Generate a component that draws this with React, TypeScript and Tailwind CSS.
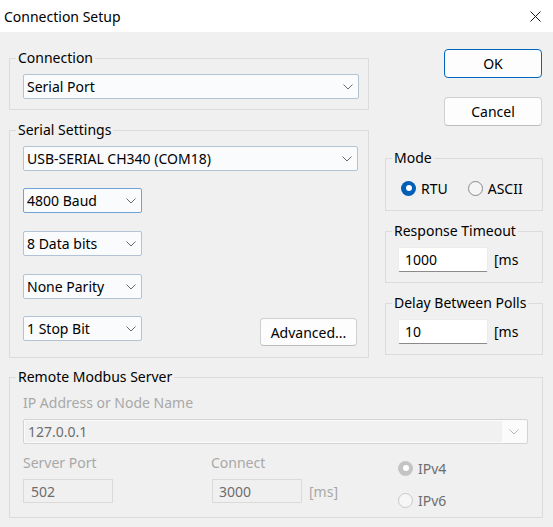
import React from 'react';

function Chevron({ color = '#6a6a6a' }: { color?: string }) {
  return (
    <svg width="10" height="6" viewBox="0 0 10 6" className="shrink-0">
      <polyline points="0.5,0.5 5,5 9.5,0.5" fill="none" stroke={color} strokeWidth="1" />
    </svg>
  );
}

function Combo({ value, width, focused }: { value: string; width: string; focused?: boolean }) {
  return (
    <div
      className={`flex items-center h-[25px] border rounded-[2px] bg-[#f9fbfd] pl-[3px] pr-[5px] ${width} ${
        focused ? 'border-[#6ea3d9]' : 'border-[#b3c3d5]'
      }`}
    >
      <span className="flex-1 truncate">{value}</span>
      <Chevron />
    </div>
  );
}

function Field({ value }: { value: string }) {
  return (
    <div className="flex items-center h-[25px] w-[90px] bg-white border border-[#ececec] border-b-[#8a8a8a] rounded-[2px] pl-[6px]">
      {value}
    </div>
  );
}

function Group({
  label,
  className = '',
  children,
}: {
  label: string;
  className?: string;
  children: React.ReactNode;
}) {
  return (
    <fieldset className={`border border-[#dcdcdc] ${className}`}>
      <legend className="ml-[6px] px-[2px] leading-[20px]">{label}</legend>
      {children}
    </fieldset>
  );
}

function Radio({ label, checked, disabled }: { label: string; checked?: boolean; disabled?: boolean }) {
  let dot = '';
  if (checked && !disabled) dot = 'bg-[#005fb8]';
  else if (checked && disabled) dot = 'bg-[#c4c4c4]';
  else if (disabled) dot = 'border border-[#c8c8c8] bg-[#f6f6f6]';
  else dot = 'border border-[#8a8a8a] bg-[#f5f5f5]';
  return (
    <div className="flex items-center h-[20px]">
      <span className={`flex items-center justify-center w-[15px] h-[15px] rounded-full ${dot}`}>
        {checked && <span className="w-[6px] h-[6px] rounded-full bg-white" />}
      </span>
      <span className={`ml-[5px] ${disabled ? 'text-[#6d6d6d]' : ''}`}>{label}</span>
    </div>
  );
}

function Button({ label, primary, className = '' }: { label: string; primary?: boolean; className?: string }) {
  return (
    <button
      className={`flex items-center justify-center bg-[#fdfdfd] border rounded-[4px] ${
        primary ? 'border-[#0067c0]' : 'border-[#d0d0d0] border-b-[#bcbcbc]'
      } ${className}`}
    >
      {label}
    </button>
  );
}

export default function App() {
  return (
    <div className="w-[553px] h-[527px] overflow-hidden bg-[#f0f0f0] text-black text-[14px] font-['Noto_Sans',sans-serif]">
      <div className="h-[32px] bg-white flex items-center justify-between pl-[4px] pr-[12px]">
        <span className="text-[14px]">Connection Setup</span>
        <svg width="11" height="11" viewBox="0 0 11 11">
          <path d="M0.5 0.5 L10.5 10.5 M10.5 0.5 L0.5 10.5" stroke="#1a1a1a" strokeWidth="1" />
        </svg>
      </div>

      <div className="pl-[9px] pr-[10px] pt-[16px]">
        <div className="flex justify-between">
          <div className="w-[360px]">
            <Group label="Connection">
              <div className="pt-[6px] pb-[10px] pl-[13px] pr-[9px]">
                <Combo value="Serial Port" width="w-full" />
              </div>
            </Group>

            <Group label="Serial Settings" className="mt-[10px]">
              <div className="pt-[6px] pb-[11px] pl-[13px] pr-[10px]">
                <Combo value="USB-SERIAL CH340 (COM18)" width="w-full" />
                <div className="mt-[17px]">
                  <Combo value="4800 Baud" width="w-[119px]" focused />
                </div>
                <div className="mt-[18px]">
                  <Combo value="8 Data bits" width="w-[119px]" />
                </div>
                <div className="mt-[18px]">
                  <Combo value="None Parity" width="w-[119px]" />
                </div>
                <div className="mt-[17px] flex items-start justify-between">
                  <Combo value="1 Stop Bit" width="w-[119px]" />
                  <Button label="Advanced..." className="mt-[2px] mr-[1px] w-[97px] h-[28px]" />
                </div>
              </div>
            </Group>
          </div>

          <div className="w-[158px] flex flex-col">
            <Button label="OK" primary className="mt-[1px] ml-auto mr-[1px] w-[98px] h-[29px]" />
            <Button label="Cancel" className="mt-[19px] ml-auto mr-[1px] w-[98px] h-[29px]" />

            <Group label="Mode" className="mt-[22px]">
              <div className="pt-[10px] pb-[12px] pl-[15px] flex gap-[20px]">
                <Radio label="RTU" checked />
                <Radio label="ASCII" />
              </div>
            </Group>

            <Group label="Response Timeout" className="mt-[10px]">
              <div className="pt-[6px] pb-[10px] pl-[12px] flex items-center gap-[6px]">
                <Field value="1000" />
                <span>[ms</span>
              </div>
            </Group>

            <Group label="Delay Between Polls" className="mt-[10px]">
              <div className="pt-[6px] pb-[10px] pl-[12px] flex items-center gap-[6px]">
                <Field value="10" />
                <span>[ms</span>
              </div>
            </Group>
          </div>
        </div>

        <Group label="Remote Modbus Server" className="mt-[9px]">
          <div className="pt-[6px] pb-[7px] pl-[13px] pr-[14px]">
            <div className="leading-[20px] text-[#a8a8a8]">IP Address or Node Name</div>
            <div className="mt-[6px] flex items-center h-[25px] border border-[#d3d3d3] bg-[#fbfbfb] p-[1px] rounded-[2px]">
              <div className="flex items-center h-full flex-1 bg-[#f1f1f1] pl-[3px] text-[#6d6d6d]">127.0.0.1</div>
              <div className="w-[24px] flex justify-center">
                <Chevron color="#b8b8b8" />
              </div>
            </div>

            <div className="mt-[9px] flex items-start">
              <div className="w-[188px]">
                <div className="leading-[20px] text-[#a8a8a8]">Server Port</div>
                <div className="mt-[6px] flex items-center h-[24px] w-[90px] border border-[#dadada] pl-[7px] text-[#6d6d6d]">
                  502
                </div>
              </div>
              <div className="w-[187px]">
                <div className="leading-[20px] text-[#a8a8a8]">Connect</div>
                <div className="mt-[6px] flex items-center gap-[7px]">
                  <div className="ml-[1px] flex items-center h-[24px] w-[90px] border border-[#dadada] pl-[6px] text-[#6d6d6d]">
                    3000
                  </div>
                  <span className="text-[#a8a8a8]">[ms]</span>
                </div>
              </div>
              <div className="mt-[5px] flex flex-col gap-[12px]">
                <Radio label="IPv4" checked disabled />
                <Radio label="IPv6" disabled />
              </div>
            </div>
          </div>
        </Group>
      </div>
    </div>
  );
}
